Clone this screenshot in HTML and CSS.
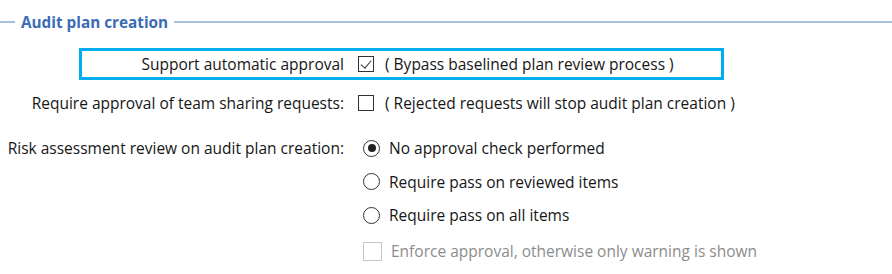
FILE: index.html
```html
<!DOCTYPE html>
<html lang="en">
<head>
  <meta charset="UTF-8" />
  <title>Audit plan creation</title>
  <link rel="stylesheet" href="styles.css">
</head>
<body>

  <div class="legend">
    <span class="legend-line short"></span>
    <span class="legend-title">Audit plan creation</span>
    <span class="legend-line"></span>
  </div>

  <div class="row highlight">
    <div class="label">Support automatic approval</div>
    <div class="control">
      <span class="check checked"></span>
      <span class="text">( Bypass baselined plan review process )</span>
    </div>
  </div>

  <div class="row sharing">
    <div class="label">Require approval of team sharing requests:</div>
    <div class="control">
      <span class="check"></span>
      <span class="text">( Rejected requests will stop audit plan creation )</span>
    </div>
  </div>

  <div class="row risk">
    <div class="label">Risk assessment review on audit plan creation:</div>
    <div class="options">
      <div class="option"><span class="radio selected"></span><span class="text">No approval check performed</span></div>
      <div class="option"><span class="radio"></span><span class="text">Require pass on reviewed items</span></div>
      <div class="option"><span class="radio"></span><span class="text">Require pass on all items</span></div>
      <div class="option enforce disabled"><span class="check"></span><span class="text">Enforce approval, otherwise only warning is shown</span></div>
    </div>
  </div>

</body>
</html>
```

FILE: styles.css
```css
body {
  margin: 0;
  font-family: "Open Sans", "Noto Sans", sans-serif;
  font-size: 15.5px;
  color: #161616;
  background: #fff;
}

.legend {
  display: flex;
  align-items: center;
  height: 44px;
}
.legend-line {
  flex: 1;
  height: 2px;
  background: #a9bddd;
}
.legend-line.short {
  flex: 0 0 15px;
}
.legend-title {
  padding: 0 6px;
  font-weight: bold;
  font-size: 15.3px;
  color: #3b6cb5;
}

.row {
  display: grid;
  grid-template-columns: 344px auto;
  column-gap: 14px;
  align-items: start;
}
.label {
  text-align: right;
  line-height: 30px;
  white-space: nowrap;
}
.control {
  display: flex;
  align-items: center;
  height: 30px;
  white-space: nowrap;
}
.control .text {
  margin-left: 11px;
}

.highlight {
  box-sizing: border-box;
  margin: 4px 0 0 79px;
  width: 645px;
  height: 32px;
  border: 3px solid #00aeef;
  grid-template-columns: 262px auto;
}
.highlight .label,
.highlight .control {
  line-height: 26px;
  height: 26px;
}

.sharing {
  margin-top: 8px;
}
.risk {
  margin-top: 15px;
}

.options {
  margin-left: 5px;
}
.option {
  display: flex;
  align-items: center;
  height: 30px;
  margin-bottom: 3.5px;
  white-space: nowrap;
}
.option .text {
  margin-left: 9px;
}
.option.enforce {
  margin-top: 6px;
}
.disabled {
  color: #8c8c8c;
}

.check {
  box-sizing: border-box;
  position: relative;
  width: 16px;
  height: 16px;
  border: 1px solid #333;
  background: #fff;
  flex: none;
}
.check.checked::after {
  content: "";
  position: absolute;
  left: 4px;
  top: 1px;
  width: 5px;
  height: 9px;
  border-right: 1.5px solid #333;
  border-bottom: 1.5px solid #333;
  transform: rotate(40deg);
}
.disabled .check {
  border-color: #c6c6c6;
  width: 19px;
  height: 19px;
}

.radio {
  box-sizing: border-box;
  position: relative;
  width: 17px;
  height: 17px;
  border: 1px solid #333;
  border-radius: 50%;
  flex: none;
}
.radio.selected::after {
  content: "";
  position: absolute;
  left: 3.5px;
  top: 3.5px;
  width: 8px;
  height: 8px;
  border-radius: 50%;
  background: #222;
}
```
